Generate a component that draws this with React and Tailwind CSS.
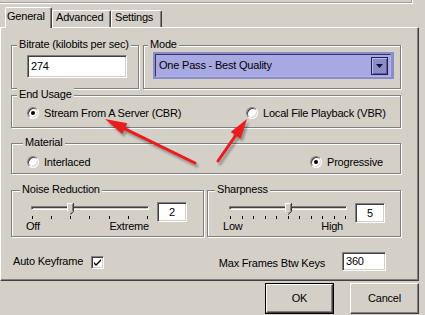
import React from 'react';

const FONT = "font-['Liberation_Sans',Arial,sans-serif] text-[11px] leading-[13px] tracking-[-0.2px] text-black";
const ETCHED = 'border border-[#808080] shadow-[inset_1px_1px_0_#fff,1px_1px_0_#fff]';
const SUNKEN =
  'border border-t-[#808080] border-l-[#808080] border-r-white border-b-white bg-white shadow-[inset_1px_1px_0_#404040,inset_-1px_-1px_0_#d4d0c8]';
const RAISED =
  'border border-t-white border-l-white border-r-[#404040] border-b-[#404040] bg-[#d4d0c8] shadow-[inset_-1px_-1px_0_#808080]';

function Group({ label, labelClass, className, children }) {
  return (
    <div className={`relative ${ETCHED} ${className}`}>
      <span className={`absolute top-[-8px] bg-[#d4d0c8] px-[2px] ${labelClass}`}>{label}</span>
      {children}
    </div>
  );
}

function Radio({ checked, label, className = '' }) {
  return (
    <div className={`flex h-[12px] items-center gap-[5px] ${className}`}>
      <span className="flex h-[12px] w-[12px] shrink-0 items-center justify-center rounded-full border border-t-[#808080] border-l-[#808080] border-r-white border-b-white bg-white shadow-[inset_1px_1px_0_#404040,inset_-1px_-1px_0_#d4d0c8]">
        {checked && <span className="h-[4px] w-[4px] rounded-full bg-black" />}
      </span>
      <span>{label}</span>
    </div>
  );
}

function Thumb() {
  return (
    <svg width="7" height="12" viewBox="0 0 7 12">
      <polygon points="0,0 6,0 6,8 3,11 0,8" fill="#d4d0c8" />
      <path d="M0.5,8.5 V0.5 H5.5" stroke="#fff" fill="none" />
      <path d="M6.5,0 V8.6 L3.4,11.6" stroke="#404040" fill="none" />
      <path d="M5.5,1 V8.2 L3,10.6" stroke="#808080" fill="none" />
    </svg>
  );
}

function Slider({ width, ticks, value, lo, hi, labelClass }) {
  const center = 1 + (value / (ticks - 1)) * (width - 3);
  return (
    <div className="flex flex-col" style={{ width }}>
      <div className="relative h-[11px]">
        <div className="mt-[2px] h-[4px] border border-t-[#808080] border-l-[#808080] border-r-white border-b-white shadow-[inset_1px_1px_0_#404040]" />
        <div className="absolute top-[-1px]" style={{ left: Math.round(center - 3) }}>
          <Thumb />
        </div>
      </div>
      <div className="mt-[1px] flex justify-between px-[1px]">
        {Array.from({ length: ticks }).map((_, i) => (
          <span key={i} className="h-[3px] w-px bg-black" />
        ))}
      </div>
      <div className={`mt-[1px] flex justify-between ${labelClass}`}>
        <span>{lo}</span>
        <span>{hi}</span>
      </div>
    </div>
  );
}

function Tab({ label, active, className }) {
  return (
    <div
      className={`rounded-t-[2px] border-t border-l border-r border-t-white border-l-white border-r-[#404040] bg-[#d4d0c8] shadow-[inset_-1px_0_0_#808080] ${
        active ? 'relative z-10 h-[21px] pt-[2px]' : 'mb-[1px] h-[17px]'
      } ${className}`}
    >
      {label}
    </div>
  );
}

function Arrow({ tail, tip, head = 20, half = 6 }) {
  const dx = tip[0] - tail[0];
  const dy = tip[1] - tail[1];
  const len = Math.hypot(dx, dy);
  const ux = dx / len;
  const uy = dy / len;
  const bx = tip[0] - ux * head;
  const by = tip[1] - uy * head;
  const px = -uy * half;
  const py = ux * half;
  const pts = `${tip[0]},${tip[1]} ${bx + px},${by + py} ${bx - px},${by - py}`;
  return (
    <g>
      <g transform="translate(2,3)" opacity="0.3" filter="url(#blur)">
        <line x1={tail[0]} y1={tail[1]} x2={bx} y2={by} stroke="#000" strokeWidth="3" strokeLinecap="round" />
        <polygon points={pts} fill="#000" />
      </g>
      <line x1={tail[0]} y1={tail[1]} x2={bx + ux * 2} y2={by + uy * 2} stroke="#ec1c1c" strokeWidth="3" strokeLinecap="round" />
      <polygon points={pts} fill="#ec1c1c" />
    </g>
  );
}

export default function App() {
  return (
    <div className={`relative h-[315px] w-[425px] overflow-hidden bg-[#d4d0c8] ${FONT}`}>
      {/* remains of the box above the tabs */}
      <div className="h-[4px] w-[413px] border-b border-r border-white shadow-[inset_-1px_-1px_0_#a0a0a0]" />

      {/* tabs */}
      <div className="mt-[3px] mb-[-1px] flex items-end pl-[5px]">
        <Tab label="General" active className="w-[47px] pl-[1px]" />
        <Tab label="Advanced" className="w-[59px] pl-[3px]" />
        <Tab label="Settings" className="w-[51px] pl-[3px]" />
      </div>

      {/* tab panel */}
      <div className="flex h-[254px] w-[419px] flex-col border border-t-white border-l-white border-r-[#404040] border-b-[#404040] pl-[10px] shadow-[inset_-1px_-1px_0_#808080]">
        <div className="mt-[17px] flex gap-[4px]">
          <Group label="Bitrate (kilobits per sec)" labelClass="left-[5px]" className="h-[44px] w-[128px] pl-[15px] pt-[9px]">
            <div className={`flex h-[23px] w-[100px] items-center pl-[3px] ${SUNKEN}`}>274</div>
          </Group>
          <Group label="Mode" labelClass="left-[4px]" className="h-[44px] w-[258px] pl-[9px] pt-[6px]">
            <div className="h-[27px] w-[241px] bg-[#8c8cc8] pt-[2px] pr-[3px] pb-[2px] pl-[2px]">
              <div className="flex h-full items-center justify-between border border-t-[#34346c] border-l-[#34346c] border-r-[#b4b4e8] border-b-[#b4b4e8] bg-[#a8a8e2] pl-[3px] pr-[2px]">
                <span>One Pass - Best Quality</span>
                <div className="flex h-[18px] w-[17px] items-center justify-center border border-[#20204c] bg-[#8c8cc8] shadow-[inset_1px_1px_0_#b8b8ea,inset_-1px_-1px_0_#5c5c9c]">
                  <svg width="7" height="4" viewBox="0 0 7 4">
                    <polygon points="0,0 7,0 3.5,4" fill="#10103a" />
                  </svg>
                </div>
              </div>
            </div>
          </Group>
        </div>

        <Group label="End Usage" labelClass="left-[5px]" className="mt-[6px] flex h-[33px] w-[390px] items-start pl-[15px] pt-[11px]">
          <Radio checked label="Stream From A Server (CBR)" className="w-[219px]" />
          <Radio label="Local File Playback (VBR)" />
        </Group>

        <Group label="Material" labelClass="left-[11px]" className="mt-[15px] flex h-[31px] w-[390px] items-start pl-[15px] pt-[12px]">
          <Radio label="Interlaced" className="w-[283px]" />
          <Radio checked label="Progressive" />
        </Group>

        <div className="mt-[16px] flex gap-[3px]">
          <Group label="Noise Reduction" labelClass="left-[8px]" className="flex h-[47px] w-[193px] items-start pl-[19px] pt-[11px]">
            <div className="mt-[2px]">
              <Slider width={118} ticks={7} value={2} lo="Off" hi="Extreme" labelClass="-ml-[5px]" />
            </div>
            <div className={`ml-[8px] flex h-[20px] w-[30px] items-center justify-center ${SUNKEN}`}>2</div>
          </Group>
          <Group label="Sharpness" labelClass="left-[7px]" className="flex h-[47px] w-[194px] items-start pl-[21px] pt-[11px]">
            <div className="mt-[2px]">
              <Slider width={118} ticks={11} value={5} lo="Low" hi="High" labelClass="-ml-[6px] mr-[4px]" />
            </div>
            <div className={`ml-[8px] mt-[1px] flex h-[20px] w-[30px] items-center justify-center ${SUNKEN}`}>5</div>
          </Group>
        </div>

        <div className="mt-[15px] flex h-[19px] w-[390px] items-center pr-[15px]">
          <span className="ml-[2px]">Auto Keyframe</span>
          <span className={`ml-[8px] mt-[2px] flex h-[13px] w-[13px] items-center justify-center ${SUNKEN}`}>
            <svg width="7" height="7" viewBox="0 0 7 7">
              <path d="M0,3 L2,5 L7,0 V2 L2,7 L0,5 Z" fill="#000" />
            </svg>
          </span>
          <span className="ml-auto mt-[3px]">Max Frames Btw Keys</span>
          <div className={`ml-[17px] flex h-[19px] w-[44px] items-center pl-[3px] ${SUNKEN}`}>360</div>
        </div>
      </div>

      {/* dialog buttons */}
      <div className="mt-[2px] flex justify-end gap-[16px] pr-[6px]">
        <div className="h-[31px] w-[69px] border border-black">
          <div className={`flex h-full w-full items-center justify-center ${RAISED}`}>OK</div>
        </div>
        <div className={`flex h-[31px] w-[69px] items-center justify-center ${RAISED}`}>Cancel</div>
      </div>

      {/* annotation arrows */}
      <svg className="pointer-events-none absolute inset-0" width="425" height="315">
        <defs>
          <filter id="blur">
            <feGaussianBlur stdDeviation="1.2" />
          </filter>
        </defs>
        <Arrow tail={[195, 163]} tip={[105, 119]} head={22} half={6} />
        <Arrow tail={[218, 161]} tip={[247, 119]} head={20} half={6} />
      </svg>
    </div>
  );
}
